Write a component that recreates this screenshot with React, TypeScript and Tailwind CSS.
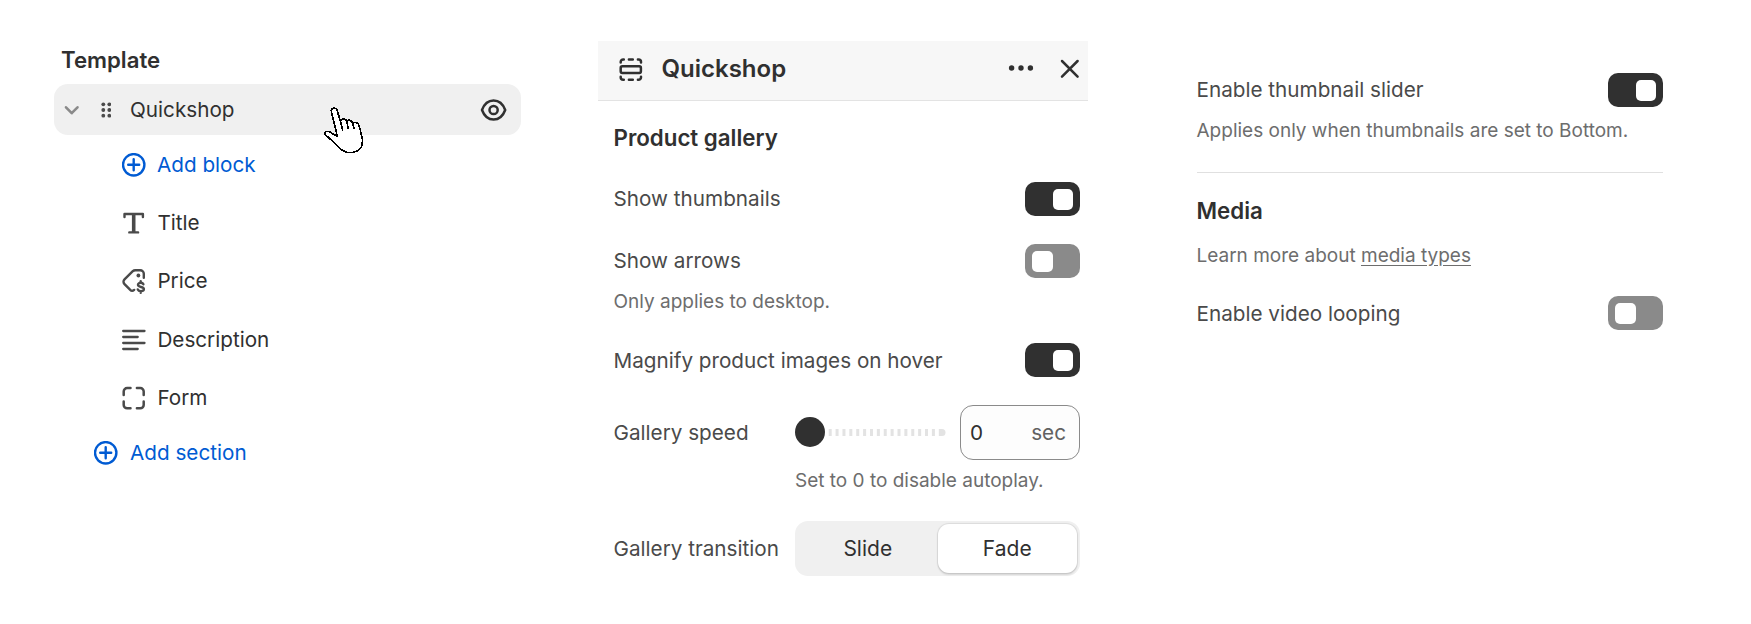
import React, { useState } from "react";
import clsx from "clsx";

function PlusCircle() {
  return (
    <svg viewBox="0 0 24 24" className="size-6 shrink-0" fill="none" stroke="#005bd3" strokeWidth="2.4" strokeLinecap="round">
      <circle cx="11.7" cy="11.8" r="10.7" />
      <path d="M11.7 6.3v11M6.2 11.8h11" />
    </svg>
  );
}

function TitleIcon() {
  return (
    <svg viewBox="0 0 24 24" className="size-6" fill="none" stroke="#4a4a4a" strokeWidth="2.4" strokeLinecap="round" strokeLinejoin="round">
      <path d="M2.5 6V3h18.400v3M7.300 21.400h8.800" />
      <path d="M11.700 3v18" strokeWidth="3.600" strokeLinecap="butt" />
    </svg>
  );
}

function PriceIcon() {
  return (
    <svg viewBox="0 0 24 26" className="h-[26px] w-6" fill="none" stroke="#4a4a4a" strokeWidth="2.4" strokeLinecap="round" strokeLinejoin="round">
      <path d="M21.800 9.800V5.800a3.600 3.600 0 0 0-3.600-3.600h-4.900a3.600 3.600 0 0 0-2.500 1L2.500 11.400a3.400 3.400 0 0 0 0 4.800l5.500 5.500a3 3 0 0 0 4.200.2" />
      <circle cx="16.400" cy="7.500" r="1.900" fill="#4a4a4a" stroke="none" />
      <path d="M21.400 16.300c-.4-1-1.400-1.500-2.700-1.500-1.600 0-2.700.8-2.700 2 0 3 5.900 1.400 5.900 4.300 0 1.400-1.300 2.100-3 2.100-1.600 0-2.700-.6-3.100-1.700M18.700 13.200v1.500M18.700 23.300v1.400" />
    </svg>
  );
}

function DescriptionIcon() {
  return (
    <svg viewBox="0 0 24 24" className="size-6" fill="none" stroke="#4a4a4a" strokeWidth="2.3" strokeLinecap="round">
      <path d="M1.200 3h21.300M1.200 9h14.500M1.200 15h21.300M1.200 21h14.500" />
    </svg>
  );
}

function FormIcon() {
  return (
    <svg viewBox="0 0 24 24" className="size-6" fill="none" stroke="#4a4a4a" strokeWidth="2.5" strokeLinecap="round">
      <path d="M1.700 8.900V5.500a3.400 3.400 0 0 1 3.400-3.400h3.400M14.900 2.100h3.400a3.400 3.400 0 0 1 3.400 3.400v3.400M21.700 15.500v3.400a3.400 3.400 0 0 1-3.400 3.400h-3.400M8.500 22.300H5.100a3.400 3.400 0 0 1-3.400-3.400v-3.400" />
    </svg>
  );
}

function SectionIcon() {
  return (
    <svg viewBox="0 0 24 24" className="size-6" fill="none" stroke="#303030" strokeWidth="2.5" strokeLinecap="round">
      <rect x="1.700" y="8.300" width="20.200" height="6.600" rx="1.600" />
      <path d="M1.700 4.500v-.6a2.500 2.500 0 0 1 2.500-2.500h.6M9.900 1.400h3.900M18.900 1.400h.6a2.500 2.500 0 0 1 2.500 2.500v.6M1.700 18.700v.6a2.500 2.500 0 0 0 2.500 2.500h.6M9.900 21.800h3.900M18.900 21.800h.6a2.500 2.500 0 0 0 2.500-2.500v-.6" />
    </svg>
  );
}

function EyeIcon() {
  return (
    <svg viewBox="0 0 28 24" className="h-6 w-7" fill="none" stroke="#303030" strokeWidth="2.5">
      <path d="M2 12C4.200 6 8.600 2.500 13.600 2.500S23 6 25.200 12C23 18 18.600 21.500 13.600 21.500S4.200 18 2 12Z" strokeLinejoin="round" />
      <circle cx="13.600" cy="12" r="4.100" />
    </svg>
  );
}

// hand pointer resting over the selected row
function HandCursor() {
  return (
    <svg
      viewBox="0 0 120 141"
      className="pointer-events-none absolute top-[23px] left-[270px] h-[47px] w-10"
      fill="#fff"
      stroke="#000"
      strokeWidth="5"
      strokeLinejoin="round"
      strokeLinecap="round"
      shapeRendering="crispEdges"
    >
      <path d="M40 88 22 13C19 4 35-1 39 9l10 33c4-9 17-8 19 1 5-6 16-4 18 6 8-6 17-2 20 9 4 12 5 24 9 38 1 10 0 17-3 24-7 13-19 17-37 17-9 0-17-5-25-11C34 111 21 97 7 86-2 77 6 72 14 74c10 2 15 10 26 14Z" />
      <path d="m49 42 7 28M68 43l5 22M86 49l4 15" fill="none" />
    </svg>
  );
}

function Toggle({ defaultOn = false }: { defaultOn?: boolean }) {
  const [on, setOn] = useState(defaultOn);

  return (
    <button
      role="switch"
      aria-checked={on}
      onClick={() => setOn(!on)}
      className={clsx("flex h-[34px] w-[55px] shrink-0 items-center rounded-[10px] px-[7px]", on ? "justify-end bg-[#303030]" : "justify-start bg-[#8a8a8a]")}
    >
      <span className={clsx("h-[21px] rounded-[5px] bg-white", on ? "w-5" : "w-[21px]")} />
    </button>
  );
}

function SettingRow({ label, on, className }: { label: string; on?: boolean; className?: string }) {
  return (
    <div className={clsx("flex h-[46px] items-center justify-between", className)}>
      <span>{label}</span>
      <Toggle defaultOn={on} />
    </div>
  );
}

const blocks = [
  { name: "Title", icon: <TitleIcon />, height: "h-[58px]" },
  { name: "Price", icon: <PriceIcon />, height: "h-[58px]" },
  { name: "Description", icon: <DescriptionIcon />, height: "h-[59px]" },
  { name: "Form", icon: <FormIcon />, height: "h-[58px]" },
];

function TemplateTree() {
  return (
    <section className="w-[467px] shrink-0 pt-9 text-[#303030]">
      <h2 className="flex h-12 items-center pl-[7px] text-[22.2px] font-semibold">Template</h2>

      <div className="relative flex h-[51px] items-center rounded-[14px] bg-[#f0f0f0] pr-[13px] pl-[10px]">
        <svg viewBox="0 0 16 12" className="h-3 w-4" fill="none" stroke="#8a8a8a" strokeWidth="2.6" strokeLinecap="round" strokeLinejoin="round">
          <path d="m2 3.300 5.700 5.900L13.500 3.300" />
        </svg>
        <svg viewBox="0 0 10 16" className="ml-[21px] h-4 w-[10px]" fill="#4a4a4a">
          {[2.3, 8, 13.7].map((cy) => (
            <g key={cy}>
              <circle cx="2.3" cy={cy} r="1.9" />
              <circle cx="8.3" cy={cy} r="1.9" />
            </g>
          ))}
        </svg>
        <span className="ml-[19px] grow">Quickshop</span>
        <EyeIcon />
        <HandCursor />
      </div>

      <button className="flex h-[59px] items-center gap-[11px] pl-[68px] text-[#005bd3]">
        <PlusCircle />
        Add block
      </button>

      <ul className="pl-[68px]">
        {blocks.map((block) => (
          <li key={block.name} className={clsx("flex items-center gap-[11.4px]", block.height)}>
            {block.icon}
            <span>{block.name}</span>
          </li>
        ))}
      </ul>

      <button className="flex h-[51px] items-center gap-3 pl-10 text-[#005bd3]">
        <PlusCircle />
        Add section
      </button>
    </section>
  );
}

function QuickshopPanel() {
  const [transition, setTransition] = useState("Fade");

  return (
    <section className="ml-[77px] w-[490px] shrink-0 pt-[41px]">
      <header className="flex h-[60px] items-center border-b border-[#e3e3e3] bg-[#f7f7f7] pr-[7px] pl-[21px] text-[#303030]">
        <span className="pb-0.5">
          <SectionIcon />
        </span>
        <h2 className="ml-[18.5px] grow pb-[3px] text-[24px] leading-7 font-semibold">Quickshop</h2>
        <svg viewBox="0 0 26 8" className="mb-[5px] h-2 w-[26px]" fill="#303030">
          <circle cx="3.6" cy="4" r="2.7" />
          <circle cx="13" cy="4" r="2.7" />
          <circle cx="22.4" cy="4" r="2.7" />
        </svg>
        <svg viewBox="0 0 22 22" className="mb-[3px] ml-[25px] size-[22px]" fill="none" stroke="#303030" strokeWidth="2.5" strokeLinecap="round">
          <path d="m3 3 15.600 15.600M18.600 3 3 18.600" />
        </svg>
      </header>

      <div className="pr-2 pl-[15.5px]">
        <h3 className="flex h-[75px] items-center pb-0.5 text-[22.3px] font-semibold text-[#303030]">Product gallery</h3>

        <SettingRow label="Show thumbnails" on />
        <SettingRow label="Show arrows" className="mt-4" />
        <p className="flex h-[34px] items-center pt-0.5 text-[19px] text-[#6d6d6d]">Only applies to desktop.</p>
        <div className="mt-[19px] flex h-[46px] items-center justify-between">
          <span className="pt-0.5">Magnify product images on hover</span>
          <Toggle defaultOn />
        </div>

        <div className="mt-[22px] flex h-[55px] items-center">
          <span className="w-[181.5px]">Gallery speed</span>
          <span className="mb-px size-[30px] shrink-0 rounded-full bg-[#303030]" />
          <svg viewBox="0 0 118 7" className="mb-px ml-[3px] h-[7px] w-[118px]" fill="#e3e3e3">
            {Array.from({ length: 16 }, (_, i) => (
              <rect key={i} x={0.7 + i * 6.88} y="0" width="3" height="7" />
            ))}
            <path d="M110.800 0h3.200a3.500 3.500 0 0 1 0 7h-3.200Z" />
          </svg>
          <label className="ml-[14px] flex h-[55px] w-[120px] items-center justify-between rounded-[13px] border border-[#8a8a8a] bg-[#fdfdfd] pr-[13px] pl-[9px]">
            <span className="text-[#303030]">0</span>
            <span className="text-[#616161]">sec</span>
          </label>
        </div>
        <p className="flex h-[41px] items-center pl-[181.5px] text-[19px] text-[#6d6d6d]">Set to 0 to disable autoplay.</p>

        <div className="mt-5 flex h-[55px] items-center">
          <span className="w-[181.5px] shrink-0">Gallery transition</span>
          <div className="flex h-[55px] grow rounded-[13px] bg-[#f0f0f0] p-[3px] pb-[2px]">
            {["Slide", "Fade"].map((name) => (
              <button
                key={name}
                onClick={() => setTransition(name)}
                className={clsx(
                  "h-[49px] flex-1 rounded-[11px] pt-px text-[21px] text-[#303030]",
                  transition === name && "bg-white shadow-[0_0_1px_1px_rgba(0,0,0,0.09),0_2px_2px_rgba(0,0,0,0.1)]"
                )}
              >
                {name}
              </button>
            ))}
          </div>
        </div>
      </div>
    </section>
  );
}

function MediaPanel() {
  return (
    <section className="ml-[108.5px] w-[466.5px] shrink-0 pt-[67px]">
      <SettingRow label="Enable thumbnail slider" on />
      <p className="flex h-[35px] items-center text-[19px] whitespace-nowrap text-[#6d6d6d]">Applies only when thumbnails are set to Bottom.</p>

      <hr className="mt-6 border-[#e0e0e0]" />

      <h3 className="mt-[15px] flex h-[46px] items-center text-[22.3px] font-semibold text-[#303030]">Media</h3>
      <p className="flex h-[42px] items-center pt-0.5 text-[19px] whitespace-pre text-[#6d6d6d]">
        Learn more about <a href="#" className="underline underline-offset-[3px]">media types</a>
      </p>
      <div className="mt-[14px] flex h-[46px] items-center justify-between">
        <span className="pt-0.5">Enable video looping</span>
        <Toggle />
      </div>
    </section>
  );
}

export default function App() {
  return (
    <main className="flex min-h-screen overflow-hidden bg-white pl-[54px] font-['Inter',sans-serif] text-[20.7px] leading-7 text-[#4a4a4a]">
      <TemplateTree />
      <QuickshopPanel />
      <MediaPanel />
    </main>
  );
}
